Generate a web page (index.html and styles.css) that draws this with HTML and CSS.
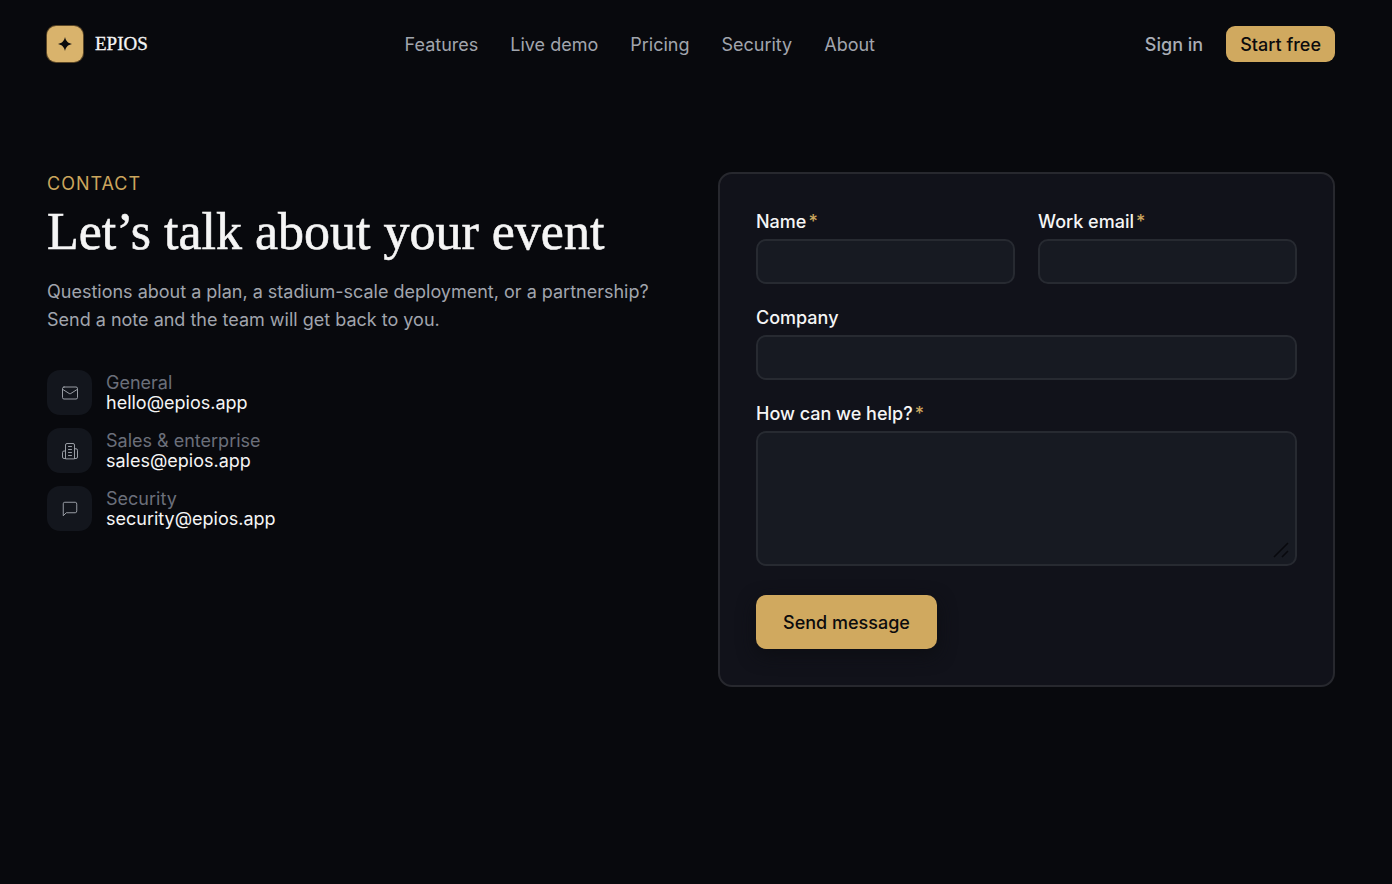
FILE: index.html
```html
<!DOCTYPE html>
<html lang="en">
<head>
  <meta charset="utf-8">
  <meta name="viewport" content="width=device-width, initial-scale=1">
  <title>Contact – EPIOS</title>
  <link rel="stylesheet" href="styles.css">
</head>
<body>
  <header class="site-header">
    <a class="brand" href="#">
      <span class="brand-mark">
        <svg viewBox="0 0 14 14" width="14" height="14" aria-hidden="true"><path fill="currentColor" d="M7 0C7.700 3.600 9.700 6.200 14 7C9.700 7.800 7.700 10.400 7 14C6.300 10.400 4.300 7.800 0 7C4.300 6.200 6.300 3.600 7 0Z"/></svg>
      </span>
      <span class="brand-name">EPIOS</span>
    </a>
    <nav class="site-nav" aria-label="Main">
      <a href="#">Features</a>
      <a href="#">Live demo</a>
      <a href="#">Pricing</a>
      <a href="#">Security</a>
      <a href="#">About</a>
    </nav>
    <div class="account">
      <a class="sign-in" href="#">Sign in</a>
      <a class="start" href="#">Start free</a>
    </div>
  </header>

  <main class="contact">
    <section class="intro">
      <p class="eyebrow">Contact</p>
      <h1 class="title">Let’s talk about your event</h1>
      <p class="lead">Questions about a plan, a stadium-scale deployment, or a partnership? Send a note and the team will get back to you.</p>
      <ul class="channels">
        <li class="channel">
          <span class="channel-icon">
            <svg class="icon" viewBox="0 0 24 24" aria-hidden="true"><rect x="2" y="4" width="20" height="16" rx="2"/><path d="m22 7-8.970 5.700a1.940 1.940 0 0 1-2.060 0L2 7"/></svg>
          </span>
          <div class="channel-text"><span class="channel-label">General</span><a href="mailto:hello@epios.app">hello@epios.app</a></div>
        </li>
        <li class="channel">
          <span class="channel-icon">
            <svg class="icon" viewBox="0 0 24 24" aria-hidden="true"><path d="M6 22V4a2 2 0 0 1 2-2h8a2 2 0 0 1 2 2v18Z"/><path d="M6 12H4a2 2 0 0 0-2 2v6a2 2 0 0 0 2 2h2M18 9h2a2 2 0 0 1 2 2v9a2 2 0 0 1-2 2h-2M10 6h4M10 10h4M10 14h4M10 18h4"/></svg>
          </span>
          <div class="channel-text"><span class="channel-label">Sales &amp; enterprise</span><a href="mailto:sales@epios.app">sales@epios.app</a></div>
        </li>
        <li class="channel">
          <span class="channel-icon">
            <svg class="icon" viewBox="0 0 24 24" aria-hidden="true"><path d="M21 15a2 2 0 0 1-2 2H7l-4 4V5a2 2 0 0 1 2-2h14a2 2 0 0 1 2 2z"/></svg>
          </span>
          <div class="channel-text"><span class="channel-label">Security</span><a href="mailto:security@epios.app">security@epios.app</a></div>
        </li>
      </ul>
    </section>

    <form class="card">
      <div class="field-row">
        <div class="field">
          <label for="name">Name<span class="required">*</span></label>
          <input id="name" type="text" required>
        </div>
        <div class="field">
          <label for="email">Work email<span class="required">*</span></label>
          <input id="email" type="email" required>
        </div>
      </div>
      <div class="field">
        <label for="company">Company</label>
        <input id="company" type="text">
      </div>
      <div class="field">
        <label for="message">How can we help?<span class="required">*</span></label>
        <div class="message-box">
          <textarea id="message" required></textarea>
          <svg class="grip" viewBox="0 0 16 16" aria-hidden="true"><path d="M1 15 15 1M9 15l6-6"/></svg>
        </div>
      </div>
      <button class="send" type="submit">Send message</button>
    </form>
  </main>
</body>
</html>
```

FILE: styles.css
```css
* {
  box-sizing: border-box;
}

body {
  margin: 0;
  min-height: 100vh;
  padding: 0 57px 0 47px;
  background: #08090d;
  color: #f5f5f5;
  font-family: Inter, "Liberation Sans", sans-serif;
  font-size: 18px;
  line-height: 24px;
}

a {
  color: inherit;
  text-decoration: none;
}

.site-header {
  display: flex;
  flex-wrap: wrap;
  justify-content: space-between;
  align-items: center;
  padding: 26px 0;
}

.brand {
  display: flex;
  align-items: center;
  gap: 12px;
}

.brand-mark {
  display: grid;
  place-items: center;
  width: 36px;
  height: 36px;
  border-radius: 9px;
  background: #d9b36c;
  box-shadow: 0 0 0 1px #5a4626;
  color: #0b0b0d;
}

.brand-name {
  font-family: "Liberation Serif", serif;
  font-size: 19px;
  font-weight: 400;
  -webkit-text-stroke: 0.3px;
}

.site-nav {
  display: flex;
  flex-wrap: wrap;
  gap: 32px;
  padding-top: 2px;
  color: #a1a5ad;
}

.account {
  display: flex;
  justify-content: flex-end;
  align-items: center;
  gap: 10px;
  font-weight: 500;
}

.sign-in {
  padding: 7px 13px 5px;
  color: #a9adb6;
}

.start {
  padding: 7px 14px 5px;
  border-radius: 9px;
  background: #d0a95f;
  color: #0b0b0d;
}

.contact {
  display: grid;
  grid-template-columns: 1fr 1fr;
  align-items: start;
  gap: 54px;
  padding: 84px 0;
}

.eyebrow {
  margin: 0;
  color: #cba65d;
  letter-spacing: 1px;
  text-transform: uppercase;
}

.title {
  margin: 6px 0 16px;
  font-family: "Liberation Serif", serif;
  font-size: 52px;
  font-weight: 400;
  line-height: 60px;
  -webkit-text-stroke: 0.6px;
}

.lead {
  margin: 0;
  color: #a1a5ad;
  line-height: 28px;
}

.channels {
  display: grid;
  gap: 13px;
  margin: 36px 0 0;
  padding: 0;
  list-style: none;
}

.channel {
  display: flex;
  align-items: center;
  gap: 14px;
}

.channel-icon {
  display: grid;
  place-items: center;
  width: 45px;
  height: 45px;
  border-radius: 13px;
  background: #13161d;
  color: #a1a5ad;
}

.icon {
  width: 18px;
  height: 18px;
  fill: none;
  stroke: currentColor;
  stroke-linecap: round;
  stroke-linejoin: round;
  stroke-width: 1.25;
}

.channel-text {
  display: grid;
  line-height: 20px;
}

.channel-label {
  color: #6b6f7a;
}

.card {
  display: grid;
  gap: 22px;
  padding: 36px;
  border: 2px solid #27282e;
  border-radius: 14px;
  background: #11121a;
}

.field-row {
  display: grid;
  grid-template-columns: 1fr 1fr;
  gap: 23px;
}

.field {
  display: grid;
  gap: 5px;
}

.field label {
  font-weight: 500;
}

.required {
  margin-left: 2px;
  color: #cba65d;
}

.field input,
.field textarea {
  display: block;
  width: 100%;
  height: 45px;
  padding: 8px 12px;
  border: 2px solid #272a31;
  border-radius: 10px;
  background: #171a22;
  color: inherit;
  font: inherit;
}

.field textarea {
  height: 135px;
  resize: none;
}

.message-box {
  position: relative;
}

.grip {
  position: absolute;
  right: 8px;
  bottom: 8px;
  width: 16px;
  height: 16px;
  fill: none;
  stroke: #08090d;
  stroke-width: 1.5;
  pointer-events: none;
}

.send {
  justify-self: start;
  margin-top: 7px;
  padding: 16px 27px 14px;
  border: 0;
  border-radius: 10px;
  background: #d0a95f;
  box-shadow: 0 6px 18px #0d0e13;
  color: #0b0b0d;
  font: inherit;
  font-weight: 500;
}

@media (max-width: 900px) {
  .contact,
  .field-row {
    grid-template-columns: 1fr;
  }
}
```
